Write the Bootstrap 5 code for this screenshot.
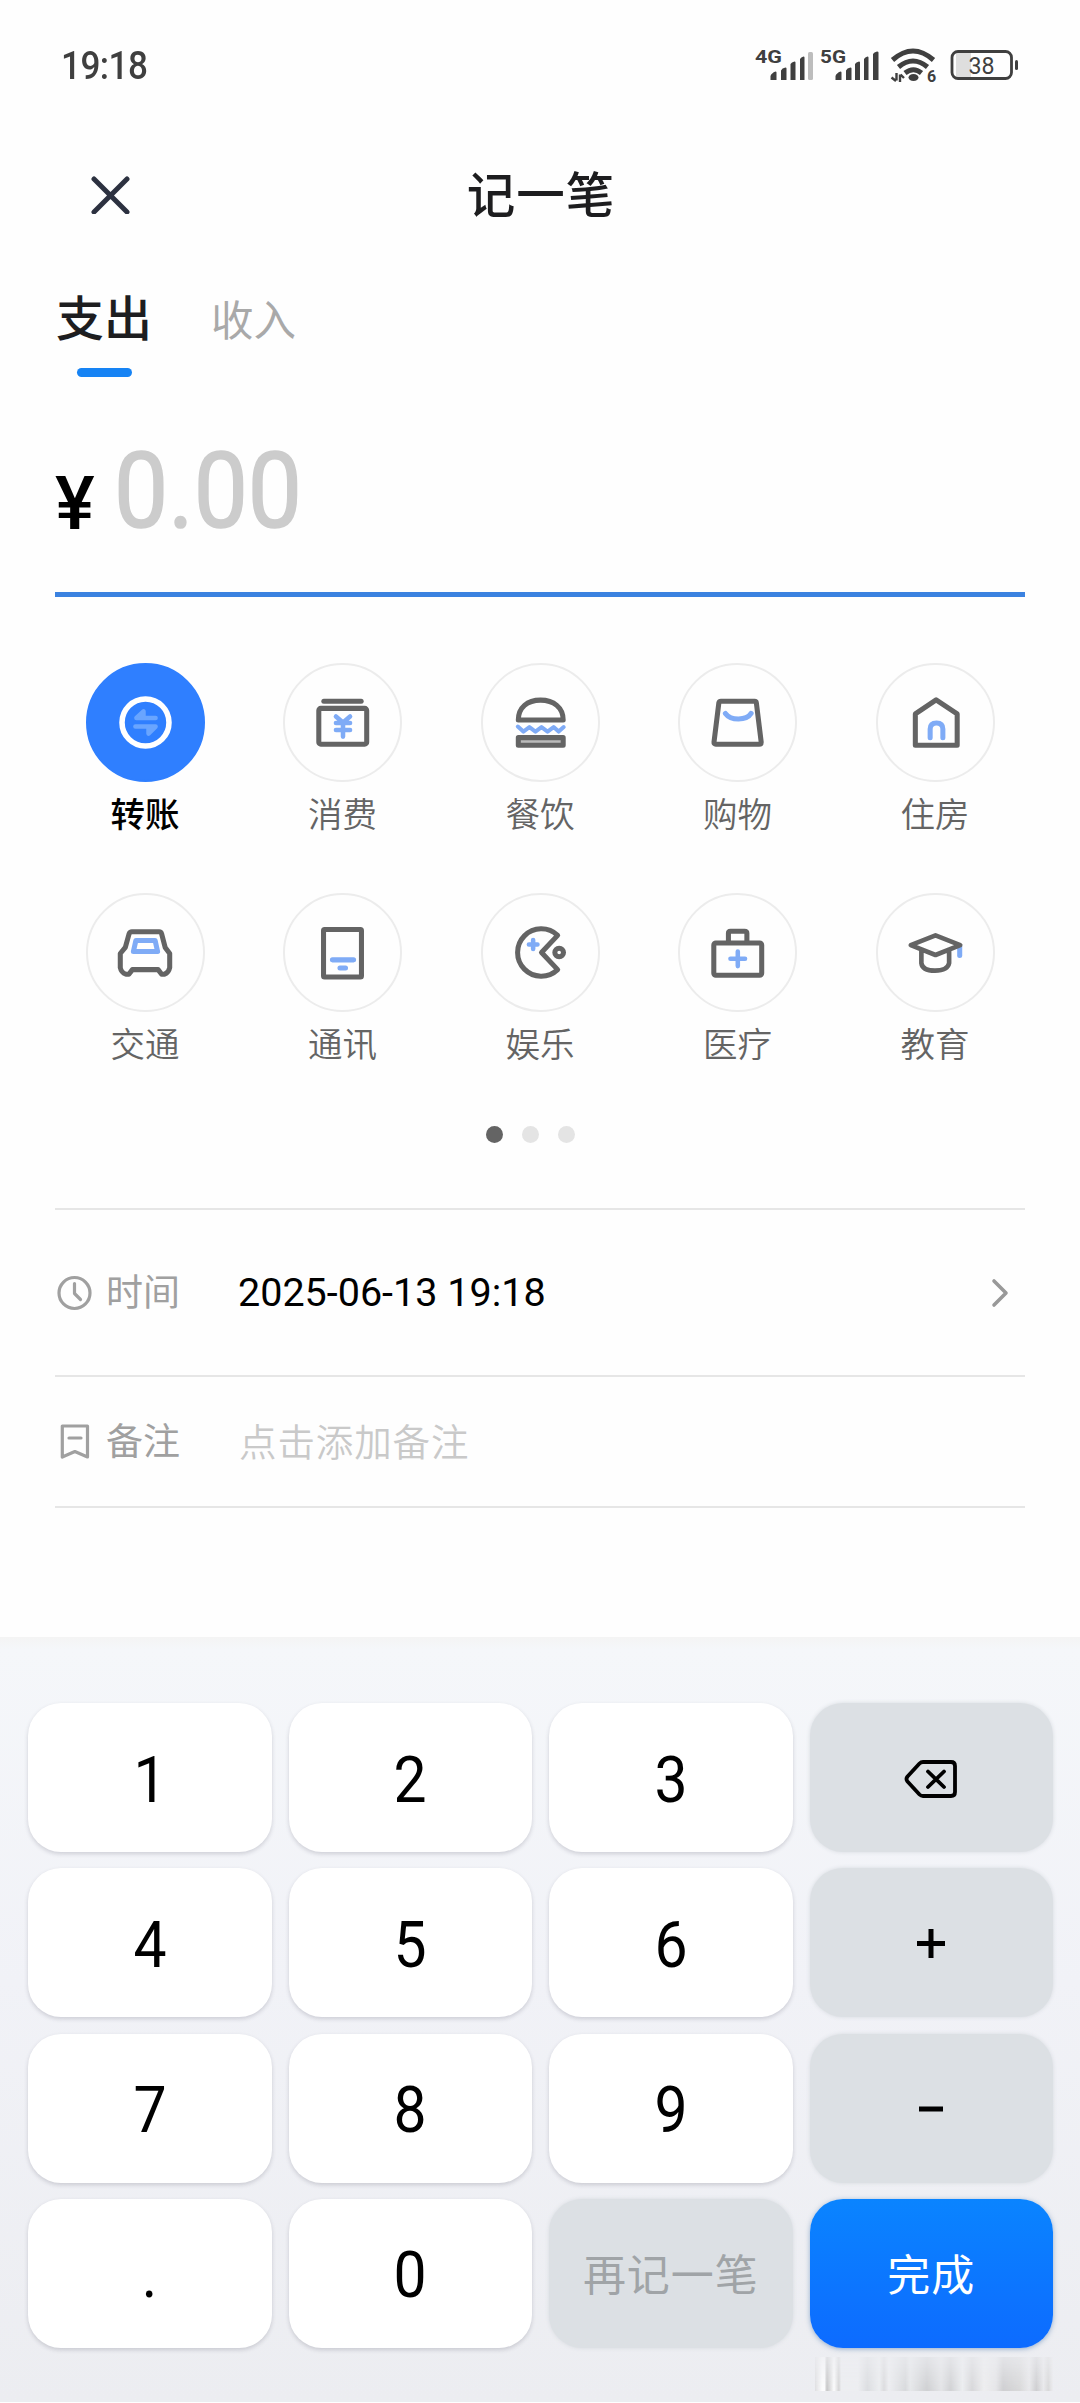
<!DOCTYPE html>
<html lang="zh-CN">
<head>
<meta charset="utf-8">
<meta name="viewport" content="width=device-width, initial-scale=1">
<title>记一笔</title>
<link href="https://cdn.jsdelivr.net/npm/bootstrap@5.3.0/dist/css/bootstrap.min.css" rel="stylesheet">
<style>
body{font-family:Roboto,"Noto Sans CJK SC",sans-serif;background:#fefefe;color:#000;width:1080px;height:2403px;overflow:hidden}
svg{display:block;flex:none}
svg text{font-family:Roboto,sans-serif}
.status-bar{height:116px;padding:16px 62px 0 61px;color:#3f3f3f}
.clock-text{font-size:39px;line-height:50px;font-weight:500;letter-spacing:-.6px;padding-top:25px;transform:scaleX(.9);transform-origin:0 50%}
.title-bar{height:156px;padding:0 91px}
.title-bar .side{width:39px}
.page-title{font-size:48.5px;font-weight:500;line-height:60px;letter-spacing:1px;color:#1d1d1f;padding:5px 0 0 2px}
.tabs-row{height:105px;padding:0 56px}
.tab-on{font-size:48px;font-weight:500;line-height:60px;color:#1d1d1f;margin-top:18px}
.tab-on::after{content:"";display:block;width:55px;height:9px;border-radius:5px;background:#1683f4;margin:18px auto 0}
.tab-off{font-size:42.500px;line-height:60px;color:#a9a9a9;margin:20px 0 0 59px}
.amount{height:220px;margin:0 55px;border-bottom:5px solid #3b82e0;}
.yen{font-size:74px;font-weight:500;line-height:80px;width:59px;margin-top:87px;padding-left:0}
.yen span{display:inline-block;transform:scaleX(1.01);transform-origin:0 50%}
.zero{font-size:106px;font-weight:400;line-height:120px;color:#ccc;-webkit-text-stroke:1.6px #ccc;margin-top:54px;transform:scaleX(.91);transform-origin:0 50%}
.cats{padding:66px 46.25px 0}
.cat{width:20%;height:230px}
.disc{width:119px;height:119px;border-radius:50%;border:2px solid #ececec}
.disc svg{margin:-2px}
.cat.on .disc{background:#2f7fff;border-color:#2f7fff}
.cat-name{font-size:34.5px;line-height:50px;color:#646464;margin-top:8px;font-weight:350}
.cat.on .cat-name{color:#000;font-weight:500}
.k{fill:none;stroke:#646464;stroke-width:5;stroke-linejoin:round;stroke-linecap:round}
.b{fill:none;stroke:#7fabf6;stroke-width:5;stroke-linejoin:round;stroke-linecap:round}
.pager{gap:18.6px;height:17px;margin-top:3px;padding-right:19px}
.pager i{width:17px;height:17px;border-radius:50%;background:#e4e4e4}
.pager i.on{background:#646464}
.form-rows{margin:65px 55px 0;border-top:2px solid #e6e6e6}
.f-row{border-bottom:2px solid #e6e6e6;font-size:37px;line-height:50px}
.f-time{height:167px}.f-note{height:131px}
.f-label{width:183px;color:#a0a0a0;gap:14px}
.f-label span,.f-hint{padding-top:3px}
.f-date{font-size:39.5px;padding-top:1px}
.f-hint{color:#c9c9c9;font-size:37.5px;letter-spacing:.9px;font-weight:350;padding-left:1px}
.keypad{margin-top:129px;height:765px;padding:66px 27px 0 28px;background:linear-gradient(#f4f4f4 0,#f5f7fa 12px,#f1f2f7 45%,#ecedf1 100%)}
.keys{display:grid;grid-template-columns:repeat(4,1fr);grid-auto-rows:149px;gap:16.3px 17px}
.key{border:0;border-radius:33px;background:#fff;box-shadow:0 2px 4px rgba(60,60,80,.2);font-size:64px;color:#000;padding:6px 0 0;line-height:70px}
.key span{display:inline-block;transform:scaleX(.92)}
.key.op{background:#dce0e4;box-shadow:0 0 4px #d6dadf;padding-top:2px}
.key.word{font-size:43px;letter-spacing:.9px;color:#a0a4a7;padding-top:5px}
.key.done{background:linear-gradient(#0a84ff,#0d6bff);color:#fff;box-shadow:0 1px 5px rgba(60,110,170,.5)}
.smudge{width:238px;height:34px;margin:9px 0 0 auto;opacity:.85;background:linear-gradient(90deg,#dcdcde 0,#fff 3%,#fff 4%,#bdbdbd 5%,#fff 8%,#d0d0d0 10%,#edeef1 11%,#edeef1 18%,#d8dadd 22%,#eceef0 27%,#d8d8da 29%,#edeef1 31%,#d4d6d8 38%,#e5e7e9 40%,#c9cacc 47%,#e2e3e5 53%,#cccdcf 57%,#eceef0 62%,#d3d3d5 66%,#eeeeef 71%,#e4e4e6 76%,#c9c9cb 79%,#d5d5d5 86%,#e8e8ea 90%,#c8c8ca 93%,#e8e8ea 96%,#d5d5d5 98%,#ececef 100%);-webkit-mask-image:linear-gradient(rgba(0,0,0,.3),#000)}
</style>
</head>
<body>
<header class="status-bar d-flex justify-content-between">
  <div class="clock-text">19:18</div>
  <svg width="264" height="40" viewBox="755 46 264 40" fill="#3f3f3f" style="margin-top:30px">
    <g font-size="19" font-weight="700"><text x="756" y="63" textLength="27" lengthAdjust="spacingAndGlyphs">4G</text><text x="821" y="63" textLength="26" lengthAdjust="spacingAndGlyphs">5G</text></g>
    <path d="M771.500 80v-4q1-3 5-4.500q1 0 1 1V80zM782 80v-9.500q1-2.500 4.500-3q1 0 1 1V80zM791.500 80V64q1-2 4-2.500q1 0 1 1V80zM801 80V59q1-2 3.500-2.500q1 0 1 1V80z"/>
    <rect x="809" y="52" width="5" height="28" rx="1.500" fill="#bdbdbd"/>
    <path d="M836.500 80v-4q1-3 5-4.500q1 0 1 1V80zM847 80v-9.500q1-2.500 4.500-3q1 0 1 1V80zM856 80V64q1-2 4-2.500q1 0 1 1V80zM865 80V59q1-2 3.500-2.500q1 0 1 1V80zM874 80V54q1-2 4-2.500q1.500 0 1.500 1V80z"/>
    <g fill="none" stroke="#3f3f3f" stroke-width="5"><path d="M893.500 60q20.500-18 41 0M899.500 67q14.500-12 29 0M906 73q8.500-6.500 16.500 0"/></g>
    <ellipse cx="914.500" cy="77.500" rx="5" ry="3.500"/>
    <path d="M897.500 73v7.500M892.500 77.500l4.500 3.500M901 82v-7.500M901.500 74.500l3.500 3.500" fill="none" stroke="#3f3f3f" stroke-width="2.400"/>
    <text x="928" y="82" font-size="16" font-weight="700">6</text>
    <rect x="957" y="53" width="15" height="24" fill="#dedede"/>
    <rect x="953" y="51.500" width="59.500" height="27" rx="6" fill="none" stroke="#3f3f3f" stroke-width="2.800"/>
    <rect x="1016" y="60" width="3" height="10" rx="1.500"/>
    <text x="969.500" y="73.500" font-size="24" textLength="26" lengthAdjust="spacingAndGlyphs">38</text>
  </svg>
</header>

<nav class="title-bar d-flex align-items-center justify-content-between">
  <svg class="side" width="39" height="39" viewBox="0 0 39 39"><path d="M3 4L36 37M36 4L3 37" stroke="#2c3140" stroke-width="5" stroke-linecap="round"/></svg>
  <div class="page-title">记一笔</div>
  <div class="side"></div>
</nav>

<div class="tabs-row d-flex align-items-start">
  <div class="tab-on">支出</div>
  <div class="tab-off">收入</div>
</div>

<div class="amount d-flex align-items-start">
  <div class="yen"><span>¥</span></div>
  <div class="zero">0.00</div>
</div>

<section class="cats d-flex flex-wrap">
  <div class="cat on d-flex flex-column align-items-center"><div class="disc"><svg width="119" height="119" viewBox="0 0 118 118"><circle cx="59" cy="59" r="23.300" fill="none" stroke="#fff" stroke-width="5.500"/><path d="M69 54.500H50L57 48V54.500M49 63H69L62 70V63" fill="#69a5ff" stroke="#69a5ff" stroke-width="4.500" stroke-linecap="round" stroke-linejoin="round"/></svg></div><div class="cat-name">转账</div></div>
  <div class="cat d-flex flex-column align-items-center"><div class="disc"><svg width="119" height="119" viewBox="0 0 118 118"><path class="k" d="M40.500 38H77.500"/><rect class="k" x="35.500" y="45" width="47.500" height="35.500" rx="2"/><path class="b" style="stroke-width:4.500" d="M52.500 53L59.500 59L66.500 53M59.500 60V73M52.500 59.500H66.500M52.500 66.500H66.500"/></svg></div><div class="cat-name">消费</div></div>
  <div class="cat d-flex flex-column align-items-center"><div class="disc"><svg width="119" height="119" viewBox="0 0 118 118"><path class="k" d="M37 56.500C37 44 46 36.800 59 36.800S81.500 44 81.500 56.500Z"/><path class="b" style="stroke-width:4" d="M36.500 63L42 68L48 63.500L54 68L60 63.500L66 68L72 63.500L77 68L82 63.500"/><rect class="k" style="fill:#bbb" x="37" y="74" width="44.500" height="7.500"/></svg></div><div class="cat-name">餐饮</div></div>
  <div class="cat d-flex flex-column align-items-center"><div class="disc"><svg width="119" height="119" viewBox="0 0 118 118"><path class="k" d="M42.500 38H76Q77.500 38 77.700 39.500L82.500 78.500Q82.500 80.500 80.500 80.500H37.500Q35.500 80.500 35.700 78.500L40.500 39.500Q41 38 42.500 38Z"/><path class="b" d="M47 50Q51 55.500 60 55.500T72.500 50"/></svg></div><div class="cat-name">购物</div></div>
  <div class="cat d-flex flex-column align-items-center"><div class="disc"><svg width="119" height="119" viewBox="0 0 118 118"><path class="k" d="M39 81.500V50.500L59.600 36.500L80.500 50.500V81.500Z"/><path class="b" d="M53.700 74V65.500Q53.700 59.500 60 59.500T66.300 65.500V74"/></svg></div><div class="cat-name">住房</div></div>
  <div class="cat d-flex flex-column align-items-center"><div class="disc"><svg width="119" height="119" viewBox="0 0 118 118"><path class="k" d="M45.500 38.500H72.500Q74.500 38.500 75 40.500L78.500 54L83 60V74Q82 79 78 80.500H75L71.500 76H46L42.500 80.500H39.500Q35 79 34 74V60L39 54L42.700 40.500Q43.500 38.500 45.500 38.500Z"/><path class="b" d="M49.500 47H68.500L71 58H47Z"/></svg></div><div class="cat-name">交通</div></div>
  <div class="cat d-flex flex-column align-items-center"><div class="disc"><svg width="119" height="119" viewBox="0 0 118 118"><rect class="k" x="40.200" y="36.200" width="37.600" height="47" rx="1"/><path class="b" d="M49 66.300H70M56.500 74.300H62"/></svg></div><div class="cat-name">通讯</div></div>
  <div class="cat d-flex flex-column align-items-center"><div class="disc"><svg width="119" height="119" viewBox="0 0 118 118"><path class="k" d="M76 42A23.500 23.500 0 1 0 76 76L60 59Z"/><circle class="k" cx="77.500" cy="59" r="4.300"/><path class="b" style="stroke-width:4.500" d="M47.500 51H56M51.700 46.500V55.500"/></svg></div><div class="cat-name">娱乐</div></div>
  <div class="cat d-flex flex-column align-items-center"><div class="disc"><svg width="119" height="119" viewBox="0 0 118 118"><rect class="k" x="35.500" y="49.500" width="47.500" height="32" rx="2"/><path class="k" d="M50 49V40Q50 38 52 38H66Q68.300 38 68.300 40V49"/><path class="b" style="stroke-width:4.500" d="M52 65.300H66.500M59.300 58V72.500"/></svg></div><div class="cat-name">医疗</div></div>
  <div class="cat d-flex flex-column align-items-center"><div class="disc"><svg width="119" height="119" viewBox="0 0 118 118"><path class="b" d="M83 53V62"/><path class="k" style="stroke-width:4.600" d="M34.500 51.700L59 42L83.500 51.700L59 61.500ZM45 57V69.500Q46 77 58.500 77T72.500 69.500V57"/></svg></div><div class="cat-name">教育</div></div>
</section>

<div class="pager d-flex justify-content-center"><i class="on"></i><i></i><i></i></div>

<section class="form-rows">
  <div class="f-row f-time d-flex align-items-center">
    <div class="f-label d-flex align-items-center"><svg width="37" height="36" viewBox="0 0 37 36" fill="none" stroke="#a0a0a0" stroke-width="3.200" stroke-linecap="round" stroke-linejoin="round"><circle cx="19.500" cy="18" r="15.500"/><path d="M19.500 8.500V18.500L25.500 24.500"/></svg><span>时间</span></div>
    <div class="f-date">2025-06-13 19:18</div>
    <svg class="ms-auto me-3" width="18" height="30" viewBox="0 0 18 30"><path d="M3 3L15 15L3 27" fill="none" stroke="#999" stroke-width="3.600" stroke-linecap="round" stroke-linejoin="round"/></svg>
  </div>
  <div class="f-row f-note d-flex align-items-center">
    <div class="f-label d-flex align-items-center"><svg width="37" height="36" viewBox="0 0 37 36" fill="none" stroke="#a0a0a0" stroke-width="3.200" stroke-linecap="round" stroke-linejoin="round"><path d="M7.300 2H32.500V33L19.900 27.500L7.300 33ZM14 14H26"/></svg><span>备注</span></div>
    <div class="f-hint">点击添加备注</div>
  </div>
</section>

<section class="keypad">
  <div class="keys">
    <button class="key"><span>1</span></button><button class="key"><span>2</span></button><button class="key"><span>3</span></button>
    <button class="key op d-flex align-items-center justify-content-center" aria-label="删除"><svg width="54" height="42" viewBox="0 0 54 42" fill="none" stroke="#000" stroke-width="3.800" stroke-linecap="round" stroke-linejoin="round"><path d="M19 4H47Q51 4 51 8V34Q51 38 47 38H19Q17 38 15.500 36.500L3.500 23.500Q1.500 21 3.500 18.500L15.500 5.500Q17 4 19 4Z"/><path d="M24 13.500L40 29M40 13.500L24 29"/></svg></button>
    <button class="key"><span>4</span></button><button class="key"><span>5</span></button><button class="key"><span>6</span></button>
    <button class="key op d-flex align-items-center justify-content-center" aria-label="加"><svg width="28" height="29" viewBox="0 0 28 29"><path d="M0 14.500H28M14 0V29" stroke="#000" stroke-width="5"/></svg></button>
    <button class="key"><span>7</span></button><button class="key"><span>8</span></button><button class="key"><span>9</span></button>
    <button class="key op d-flex align-items-center justify-content-center" aria-label="减"><svg width="24" height="6" viewBox="0 0 24 6"><path d="M0 3H24" stroke="#000" stroke-width="5"/></svg></button>
    <button class="key"><span>.</span></button><button class="key"><span>0</span></button>
    <button class="key op word">再记一笔</button><button class="key word done">完成</button>
  </div>
  <div class="smudge"></div>
</section>
<script src="https://cdn.jsdelivr.net/npm/bootstrap@5.3.0/dist/js/bootstrap.bundle.min.js"></script>
</body>
</html>
